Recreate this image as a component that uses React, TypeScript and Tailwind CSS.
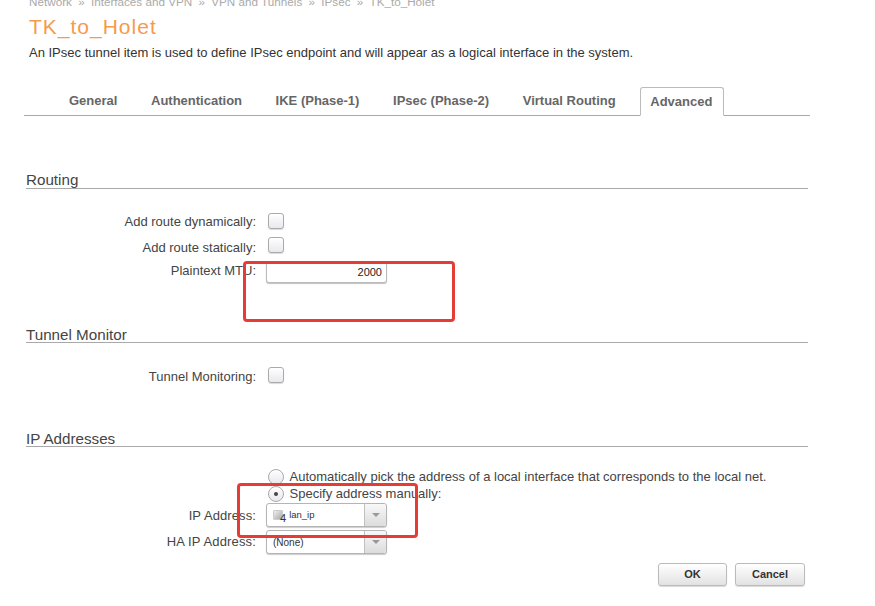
import React from "react";

const font = "font-['Liberation_Sans',Arial,sans-serif]";

function Heading({ children, className = "" }: { children: React.ReactNode; className?: string }) {
  return (
    <div className={`ml-[26px] w-[782px] h-[17px] border-b border-[#a9a9a9] text-[15.2px] text-[#444] ${className}`}>
      {children}
    </div>
  );
}

function Check({ className = "" }: { className?: string }) {
  return (
    <div className={`ml-[12px] w-[16px] h-[16px] rounded-[3px] border border-[#aaa] bg-gradient-to-b from-white to-[#e8e8ee] shadow-[0_1px_1px_rgba(0,0,0,0.15)] ${className}`} />
  );
}

function Row({ label, children, className = "", labelClass = "" }: { label: string; children: React.ReactNode; className?: string; labelClass?: string }) {
  return (
    <div className={`flex ${className}`}>
      <div className={`w-[256px] shrink-0 text-right text-[13px] text-[#444] leading-[16px] ${labelClass}`}>{label}</div>
      {children}
    </div>
  );
}

function Select({ children }: { children: React.ReactNode }) {
  return (
    <div className="ml-[10px] w-[121px] h-[24px] flex rounded-[3px] border border-[#b5b5b5] bg-white shadow-[0_1px_1px_rgba(0,0,0,0.2)]">
      <div className="flex-1 flex items-center min-w-0 pl-[6px] text-[10px] text-[#333]">{children}</div>
      <div className="w-[22px] border-l border-[#c0c0c0] rounded-r-[3px] bg-gradient-to-b from-[#f8f8f8] to-[#dcdcdc] flex items-center justify-center">
        <div className="w-0 h-0 border-l-[4px] border-r-[4px] border-t-[4px] border-l-transparent border-r-transparent border-t-[#999]" />
      </div>
    </div>
  );
}

function Radio({ on }: { on?: boolean }) {
  return (
    <div className="ml-[268px] w-[16px] h-[16px] rounded-full border border-[#aaa] bg-gradient-to-b from-white to-[#e8e8ee] flex items-center justify-center shrink-0">
      {on && <div className="w-[4px] h-[4px] rounded-full bg-[#444]" />}
    </div>
  );
}

function Btn({ children, w }: { children: React.ReactNode; w: string }) {
  return (
    <div className={`${w} h-[23px] flex items-center justify-center rounded-[3px] border border-[#bbb] bg-gradient-to-b from-white to-[#e2e2e2] text-[11px] font-bold text-[#333] shadow-[0_1px_1px_rgba(0,0,0,0.15)]`}>
      {children}
    </div>
  );
}

const tabs = ["General", "Authentication", "IKE (Phase-1)", "IPsec (Phase-2)", "Virtual Routing"];
const crumbs = ["Network", "»", "Interfaces and VPN", "»", "VPN and Tunnels", "»", "IPsec", "»", "TK_to_Holet"];

export default function App() {
  return (
    <div className={`relative w-[875px] h-[606px] overflow-hidden bg-white ${font}`}>
      <div className="ml-[29px] -mt-[5px] h-[14px] flex gap-[6.25px] text-[11.7px] leading-[14px] text-[#aaa] whitespace-nowrap">
        {crumbs.map((c, i) => (
          <span key={i}>{c}</span>
        ))}
      </div>
      <div className="ml-[29px] mt-[5px] h-[26px] text-[21px] leading-[26px] text-[#f79a4c] tracking-[1px]">TK_to_Holet</div>
      <div className="ml-[29px] mt-[5px] h-[16px] text-[13px] leading-[16px] text-[#333]">
        An IPsec tunnel item is used to define IPsec endpoint and will appear as a logical interface in the system.
      </div>

      <div className="ml-[24px] mt-[26px] w-[786px] h-[29px] border-b border-[#aaa] flex items-stretch pl-[34px] gap-[11.6px]">
        {tabs.map((t) => (
          <div key={t} className="px-[11px] pt-[6px] text-[13px] font-bold leading-[16px] text-[#666] whitespace-nowrap">{t}</div>
        ))}
        <div className="h-[29px] ml-[2px] pl-[9px] pr-[11px] pt-[6px] border border-[#bbb] border-b-white rounded-t-[3px] bg-white text-[13px] font-bold leading-[16px] text-[#666]">
          Advanced
        </div>
      </div>

      <Heading className="mt-[56px] leading-[15px]">Routing</Heading>

      <Row label="Add route dynamically:" className="mt-[25px] h-[16px]"><Check className="-mt-[1px]" /></Row>
      <Row label="Add route statically:" className="mt-[10px] h-[16px]"><Check className="-mt-[3px]" /></Row>
      <Row label="Plaintext MTU:" className="mt-[5px] h-[20px] items-start" labelClass="pt-[2px]">
        <div className="ml-[10px] w-[121px] h-[22px] rounded-[3px] border border-[#bbb] bg-white shadow-[0_1px_1px_rgba(0,0,0,0.25)] text-right pr-[4px] text-[11px] leading-[20px] text-[#222]">
          2000
        </div>
      </Row>

      <Heading className="mt-[45px] leading-[17px]">Tunnel Monitor</Heading>
      <Row label="Tunnel Monitoring:" className="mt-[26px] h-[16px]"><Check className="-mt-[2px]" /></Row>

      <Heading className="mt-[45px] leading-[17px]">IP Addresses</Heading>

      <div className="mt-[22px] flex items-center h-[16px]">
        <Radio />
        <span className="ml-[5.5px] text-[13px] text-[#444] whitespace-nowrap">Automatically pick the address of a local interface that corresponds to the local net.</span>
      </div>
      <div className="mt-[1px] flex items-center h-[16px]">
        <Radio on />
        <span className="ml-[5.5px] text-[13px] text-[#444] whitespace-nowrap">Specify address manually:</span>
      </div>
      <Row label="IP Address:" className="mt-[1px] items-center" labelClass="tracking-[0.1px] pt-[1px]">
        <Select>
          <div className="w-[10px] h-[10px] -mt-[1px] shrink-0 rounded-[1px] border border-[#ccc] bg-gradient-to-br from-[#eee] to-[#aaa]" />
          <span className="-ml-[3px] mt-[7px] text-[11px] leading-none text-[#333]">4</span>
          <span className="ml-[3px] text-[9.5px]">lan_ip</span>
        </Select>
      </Row>
      <Row label="HA IP Address:" className="mt-[3px] items-center" labelClass="tracking-[0.15px]">
        <Select>(None)</Select>
      </Row>

      <div className="mt-[9px] ml-[658px] flex gap-[8px]">
        <Btn w="w-[69px]">OK</Btn>
        <Btn w="w-[70px]">Cancel</Btn>
      </div>

      <div className="absolute left-[243px] top-[261px] w-[212px] h-[61px] border-[3px] border-[#e53d35] rounded-[4px]" />
      <div className="absolute left-[237px] top-[483px] w-[181px] h-[55px] border-[3px] border-[#e53d35] rounded-[4px]" />
    </div>
  );
}
